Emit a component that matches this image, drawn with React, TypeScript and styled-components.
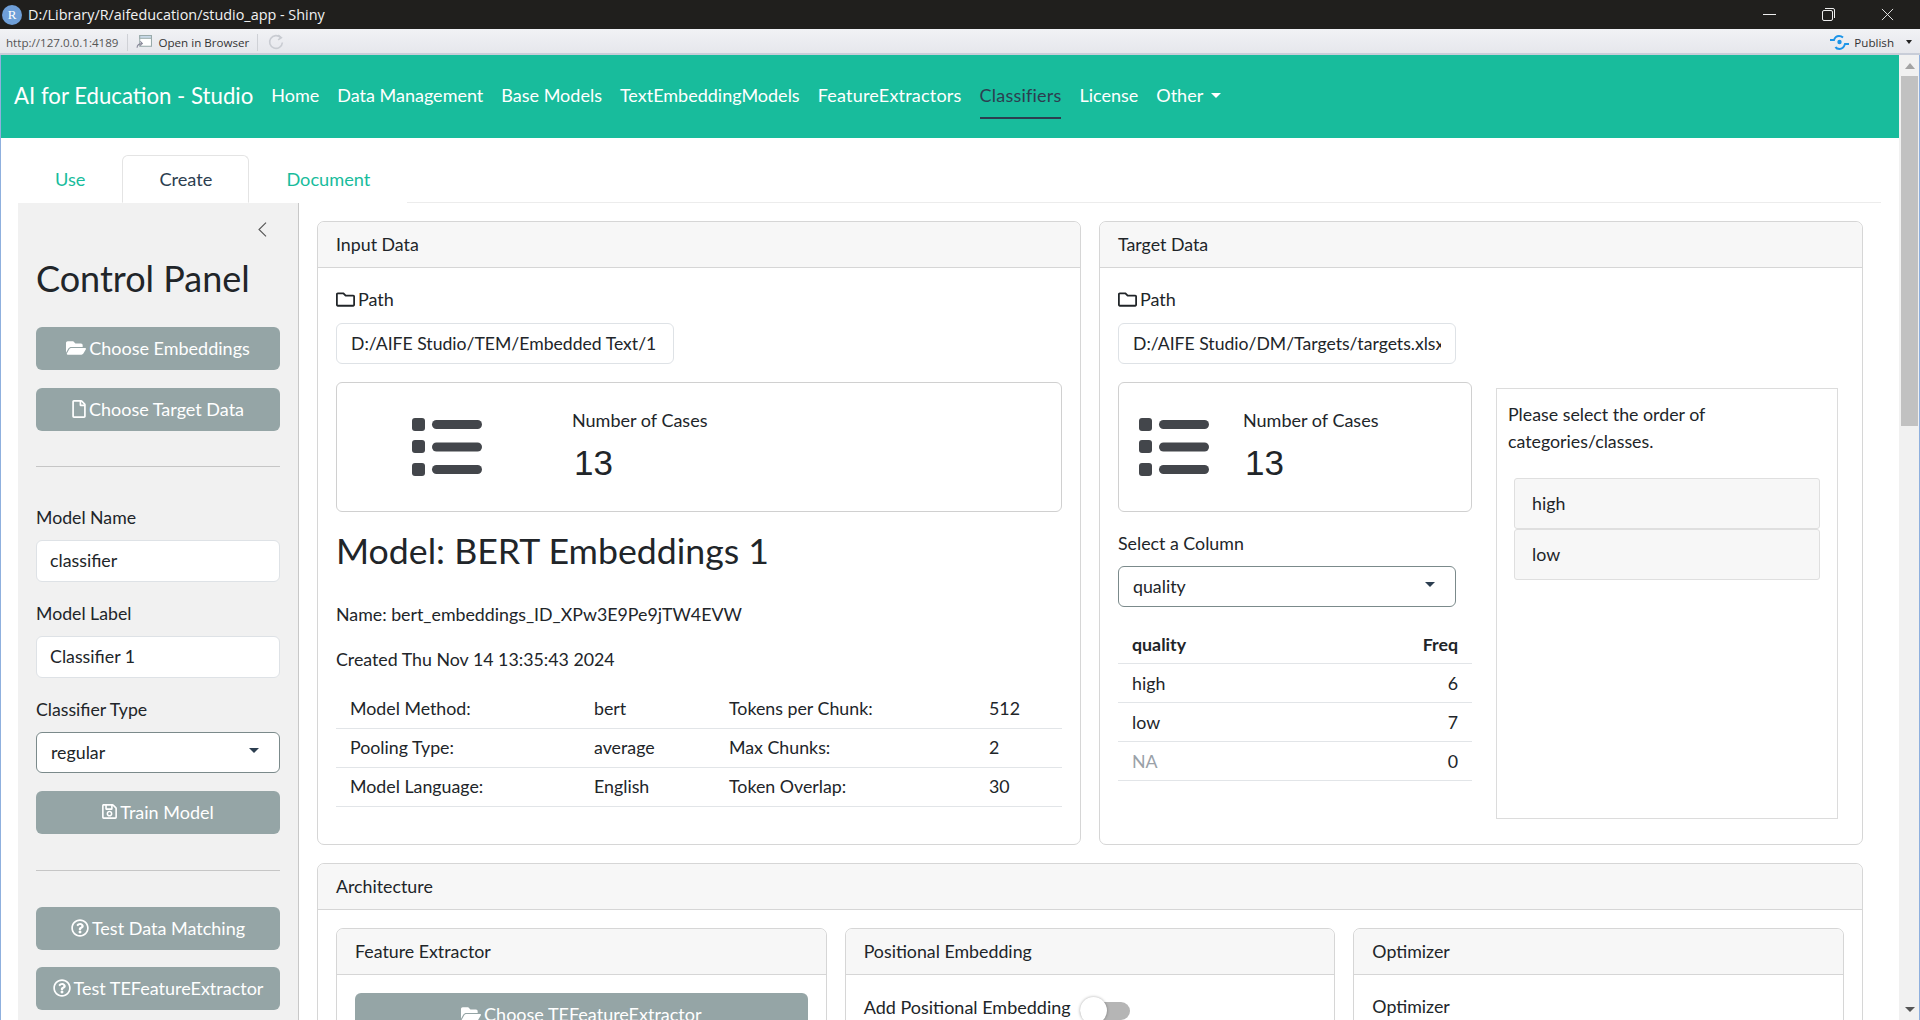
import React from "react";
import styled, { createGlobalStyle } from "styled-components";
import { FaFolderOpen, FaRegFile, FaRegSave, FaRegQuestionCircle, FaRegFolder } from "react-icons/fa";

const Global = createGlobalStyle`
  html, body { margin: 0; padding: 0; height: 100%; overflow: hidden; background: #fff; }
  body { font-family: Lato, "Liberation Sans", sans-serif; font-size: 17.8px; color: #212529; }
  * { box-sizing: border-box; }
`;

const Shell = styled.div`display: flex; flex-direction: column; width: 1920px; height: 1020px; overflow: hidden;`;
const TitleBar = styled.div`height: 29px; background: #201f1d; color: #f2f2f2; display: flex; align-items: center; padding: 0 3px 0 2px; font: 14.4px "Open Sans", sans-serif; flex: none;`;
const RLogo = styled.span`width: 20px; height: 20px; border-radius: 50%; background: #6f9fd8; color: #fff; font: 13px "Liberation Serif", serif; display: flex; align-items: center; justify-content: center; margin-right: 6px;`;
const TitleText = styled.span`flex: 1;`;
const WinBtn = styled.span`width: 59px; display: flex; justify-content: center;`;
const ToolBar = styled.div`height: 26px; flex: none; background: linear-gradient(#f1f2f5, #e6e7ec); border-bottom: 2px solid #c8cdd8; display: flex; align-items: center; padding: 2px 0 0 6px; font: 11.6px "Open Sans", sans-serif; color: #333;`;
const ToolSep = styled.span<{ $after?: number }>`width: 1px; height: 17px; background: #cfd1d6; margin: 0 ${(p) => p.$after ?? 8}px 0 8px;`;
const ToolUrl = styled.span`color: #555;`;
const ToolIcon = styled.svg`margin-right: 7px; flex: none;`;
const ToolSpacer = styled.span`flex: 1;`;
const Publish = styled.span`display: flex; align-items: center; gap: 5px; margin-right: 8px;`;
const Caret = styled.span`width: 0; height: 0; border: 3.5px solid transparent; border-top: 4px solid #222; border-bottom: 0; margin-left: 7px;`;

const Viewport = styled.div`flex: 1; min-height: 0; display: flex; border-left: 1px solid #8fb0de; border-right: 1px solid #8fb0de; background: #fff;`;
const Page = styled.div`flex: 1; min-width: 0; display: flex; flex-direction: column; overflow: hidden;`;
const Scrollbar = styled.div`width: 20px; flex: none; background: #f1f1f1; display: flex; flex-direction: column; align-items: center; padding: 0 0 0 1px;`;
const ScrollArrow = styled.div<{ $down?: boolean }>`height: 21px; width: 100%; flex: none; display: flex; align-items: center; justify-content: center;
  &::after { content: ""; border: 5px solid transparent; ${(p) => (p.$down ? "border-top: 5px solid #555; border-bottom: 0;" : "border-bottom: 6px solid #a3a3a3; border-top: 0;")} }`;
const ScrollThumb = styled.div`width: 17px; height: 350px; background: #c1c1c1; flex: none;`;
const ScrollFill = styled.div`flex: 1;`;

const Nav = styled.nav`height: 83px; flex: none; background: #18bc9c; display: flex; align-items: center; padding: 0 0 3px 13px; color: #fff;`;
const Brand = styled.span`font-size: 22.2px; margin-right: 18px;`;
const NavLink = styled.span<{ $active?: boolean; $track?: boolean }>`font-size: 18px; line-height: 24px; padding: 10px 0; margin-right: 18px; display: flex; align-items: center; gap: 8px; letter-spacing: ${(p) => (p.$track ? "0.21px" : "0")}; color: ${(p) => (p.$active ? "#2c3e50" : "#fff")}; border-bottom: 2px solid ${(p) => (p.$active ? "#2c3e50" : "transparent")}; border-top: 2px solid transparent;`;
const NavCaret = styled.span`border: 5px solid transparent; border-top: 5px solid #fff; border-bottom: 0;`;

const Tabs = styled.div`height: 65px; flex: none; margin: 0 18px 0 17px; padding-top: 17px; display: flex; border-bottom: 1px solid #ececec;`;
const Tab = styled.div<{ $active?: boolean }>`height: 48px; padding: 0 36px; margin-bottom: -1px; font-size: 18.2px; display: flex; align-items: center; border: 1px solid ${(p) => (p.$active ? "#e4e4e4" : "transparent")}; ${(p) => p.$active && "border-bottom-color: #fff;"} border-radius: 6px 6px 0 0; color: ${(p) => (p.$active ? "#2c3e50" : "#18bc9c")}; background: #fff;`;

const Layout = styled.div`flex: 1; min-height: 0; margin-left: 17px; display: flex;`;
const Side = styled.aside`width: 281px; flex: none; background: #f1f1f1; border-right: 1px solid #c8c8c8; padding: 0 18px; display: flex; flex-direction: column; align-items: stretch;`;
const Collapse = styled.div`height: 53px; flex: none; display: flex; justify-content: flex-end; align-items: center; padding-right: 13px;`;
const SideTitle = styled.h2`margin: 0 0 27px; font-size: 36px; line-height: 44px; font-weight: 400; color: #212529;`;
const Btn = styled.div<{ $mb?: number; $mt?: number }>`height: 43px; flex: none; padding-bottom: 2px; background: #95a5a6; border-radius: 6px; color: #fff; font-size: 18px; display: flex; align-items: center; justify-content: center; gap: 3px; margin-top: ${(p) => p.$mt ?? 0}px; margin-bottom: ${(p) => p.$mb ?? 18}px;`;
const FileIcon = styled(FaRegFile)`width: 14px; height: 18px;`;
const SaveIcon = styled(FaRegSave)`width: 15px; height: 17px;`;
const Rule = styled.hr<{ $after: number; $before: number }>`width: 100%; height: 1px; flex: none; border: 0; background: #c6c6c6; margin: ${(p) => p.$before}px 0 ${(p) => p.$after}px;`;
const Label = styled.div`font-size: 17.7px; line-height: 24px; padding-top: 1px; margin-bottom: 10px;`;
const SideInput = styled.div`height: 42px; flex: none; background: #fff; border: 1px solid #dee2e6; border-radius: 6px; padding: 0 13px 2px; display: flex; align-items: center; margin-bottom: 19px;`;
const SelectBox = styled.div<{ $w?: number }>`height: 41px; flex: none; background: #fff; border: 1px solid #7b8a8b; border-radius: 6px; padding: 0 14px 2px; display: flex; align-items: center; justify-content: space-between; ${(p) => p.$w && `width: ${p.$w}px;`}`;
const SelCaret = styled.span`border: 5px solid transparent; border-top: 5px solid #2c3e50; border-bottom: 0; margin-right: 6px; margin-top: -2px;`;

const Content = styled.main`flex: 1; min-width: 0; padding: 18px 36px 0 18px; display: flex; flex-direction: column; gap: 18px;`;
const Row = styled.div`display: flex; gap: 18px; flex: none;`;
const Card = styled.section<{ $h?: number; $flex?: boolean }>`border: 1px solid #d6d6d6; border-radius: 7px; background: #fff; ${(p) => p.$h && `height: ${p.$h}px;`} ${(p) => p.$flex && "flex: 1; min-width: 0;"}`;
const CardHead = styled.header`height: 46px; background: #f7f7f7; border-bottom: 1px solid #d6d6d6; border-radius: 7px 7px 0 0; padding: 0 18px 2px; display: flex; align-items: center;`;
const CardBody = styled.div`padding: 18px;`;
const FormBody = styled.div`padding: 20px 18px 18px;`;
const TopBody = styled.div`padding: 19px 18px 18px;`;
const PathLabel = styled.div`display: flex; align-items: center; gap: 3px; height: 24px; margin-bottom: 12px; font-size: 18px;`;
const PathBox = styled.div`width: 338px; height: 41px; border: 1px solid #dee2e6; border-radius: 6px; padding: 0 14px; display: flex; align-items: center; margin-bottom: 18px;`;
const PathText = styled.span`display: block; font-size: 17.6px; white-space: nowrap; overflow: hidden; flex: 1; min-width: 0;`;
const ValueBox = styled.div<{ $col: number }>`height: 130px; border: 1px solid #d0d0d0; border-radius: 6px; display: grid; grid-template-columns: ${(p) => p.$col}px 1fr; align-items: center;`;
const ValueIcon = styled.div<{ $left: number }>`display: flex; padding-left: ${(p) => p.$left}px;`;
const ValueText = styled.div`padding-bottom: 2px;`;
const ValueTitle = styled.div`font-size: 18px; line-height: 24px; margin-bottom: 9px;`;
const ValueNum = styled.div`font: 35px/44px "Liberation Sans", sans-serif; padding-left: 2px;`;
const ModelTitle = styled.h3`margin: 18px 0 30px; font-size: 35.7px; line-height: 42px; font-weight: 400;`;
const Para = styled.p`margin: 0 0 21px; line-height: 24px;`;
const InfoTable = styled.div`display: grid; grid-template-columns: 244px 135px 260px 1fr; margin-top: -2px;`;
const InfoCell = styled.div`height: 39px; border-bottom: 1px solid #e2e5e8; padding: 0 0 2px 14px; display: flex; align-items: center;`;
const TargetGrid = styled.div`display: grid; grid-template-columns: 354px 342px; column-gap: 24px;`;
const FieldLabel = styled.div`line-height: 24px; margin: 19px 0 11px;`;
const FreqTable = styled.div`display: grid; grid-template-columns: 1fr auto; margin-top: 18px; width: 354px;`;
const FreqCell = styled.div<{ $head?: boolean; $right?: boolean; $muted?: boolean }>`height: 39px; border-bottom: 1px solid #e2e5e8; display: flex; align-items: center; font-weight: ${(p) => (p.$head ? 700 : 400)}; padding: 0 14px; justify-content: ${(p) => (p.$right ? "flex-end" : "flex-start")}; color: ${(p) => (p.$muted ? "#9aa1a8" : "#212529")};`;
const OrderBox = styled.div`height: 431px; margin-top: 6px; border: 1px solid #dcdcdc; padding: 12px 11px; width: 342px;`;
const OrderText = styled.div`line-height: 27px; margin-bottom: 23px;`;
const OrderItem = styled.div`height: 51px; margin: 0 6px; background: #f7f7f7; border: 1px solid #dfdfdf; border-radius: 3px; padding: 0 17px 2px; display: flex; align-items: center;`;
const ArchBody = styled.div`padding: 18px; display: grid; grid-template-columns: 1fr 1fr 1fr; gap: 18px;`;
const SwitchRow = styled.div`display: flex; align-items: center; gap: 9px; height: 24px; font-size: 18px;`;
const SwitchTrack = styled.span`width: 50px; height: 18px; margin-top: 7px; border-radius: 9px; background: #b5b5b5; position: relative;`;
const SwitchKnob = styled.span`position: absolute; left: 0; top: -5px; width: 27px; height: 27px; border-radius: 50%; background: #fff; box-shadow: 0 0 3px rgba(0,0,0,.35);`;

const ListIcon = () => (
  <svg width="70" height="58" viewBox="0 0 70 58" fill="#43464b">
    <rect x="0" y="0" width="13" height="13" rx="3" />
    <rect x="0" y="22" width="13" height="13" rx="3" />
    <rect x="0" y="45" width="13" height="13" rx="3" />
    <rect x="20" y="2" width="50" height="9" rx="4.5" />
    <rect x="20" y="24.5" width="50" height="9" rx="4.5" />
    <rect x="20" y="47" width="50" height="9" rx="4.5" />
  </svg>
);

const PublishIcon = () => (
  <svg width="19" height="15" viewBox="0 0 19 15" fill="none" stroke="#1c94e8" strokeWidth="2">
    <path d="M0 5h4c1-3 3-4 5-4s3 .6 4 1.500" />
    <path d="M19 9h-4c-1 3-3 5-5.500 5S6 13 5.500 12" />
    <circle cx="9.500" cy="7" r="2.200" fill="#1c94e8" stroke="none" />
  </svg>
);

export default function App() {
  return (
    <Shell>
      <Global />
      <TitleBar>
        <RLogo>R</RLogo>
        <TitleText>D:/Library/R/aifeducation/studio_app - Shiny</TitleText>
        <WinBtn>
          <svg width="13" height="2"><rect width="13" height="1" fill="#eee" /></svg>
        </WinBtn>
        <WinBtn>
          <svg width="13" height="13" viewBox="0 0 13 13" fill="none" stroke="#eee">
            <rect x="0.500" y="2.500" width="10" height="10" rx="1.500" />
            <path d="M3 .5h8a1.500 1.500 0 0 1 1.500 1.500v8" />
          </svg>
        </WinBtn>
        <WinBtn>
          <svg width="13" height="13" viewBox="0 0 14 14" stroke="#eee"><path d="M1 1l12 12M13 1L1 13" /></svg>
        </WinBtn>
      </TitleBar>
      <ToolBar>
        <ToolUrl>http://127.0.0.1:4189</ToolUrl>
        <ToolSep />
        <ToolIcon width="16" height="14" viewBox="0 0 15 13">
          <rect x="3.500" y="0.500" width="11" height="10" fill="#fff" stroke="#9aa" />
          <rect x="3.500" y="0.500" width="11" height="2.500" fill="#cfe0f0" stroke="#9aa" />
          <path d="M1 12c0-3 2-4 5-4M4 6l2 2-2 2" fill="none" stroke="#889" />
        </ToolIcon>
        <span>Open in Browser</span>
        <ToolSep $after={10} />
        <svg width="16" height="16" viewBox="0 0 15 15" fill="none" stroke="#c9ccd2" strokeWidth="1.500">
          <path d="M12 3.500A6 6 0 1 0 13.500 8" />
          <path d="M9.500 1l3 2.500-3 2" />
        </svg>
        <ToolSpacer />
        <Publish>
          <PublishIcon />
          <span>Publish</span>
          <Caret />
        </Publish>
      </ToolBar>
      <Viewport>
        <Page>
          <Nav>
            <Brand>AI for Education - Studio</Brand>
            <NavLink>Home</NavLink>
            <NavLink>Data Management</NavLink>
            <NavLink>Base Models</NavLink>
            <NavLink>TextEmbeddingModels</NavLink>
            <NavLink $track>FeatureExtractors</NavLink>
            <NavLink $active $track>Classifiers</NavLink>
            <NavLink>License</NavLink>
            <NavLink>Other <NavCaret /></NavLink>
          </Nav>
          <Tabs>
            <Tab>Use</Tab>
            <Tab $active>Create</Tab>
            <Tab>Document</Tab>
          </Tabs>
          <Layout>
            <Side>
              <Collapse>
                <svg width="9" height="15" viewBox="0 0 9 15" fill="none" stroke="#555" strokeWidth="1.100">
                  <path d="M8 .7L1 7.500 8 14.300" />
                </svg>
              </Collapse>
              <SideTitle>Control Panel</SideTitle>
              <Btn><FaFolderOpen size={20} />Choose Embeddings</Btn>
              <Btn $mb={0}><FileIcon />Choose Target Data</Btn>
              <Rule $before={35} $after={38} />
              <Label>Model Name</Label>
              <SideInput>classifier</SideInput>
              <Label>Model Label</Label>
              <SideInput>Classifier 1</SideInput>
              <Label>Classifier Type</Label>
              <SelectBox>regular<SelCaret /></SelectBox>
              <Btn $mt={18} $mb={0}><SaveIcon />Train Model</Btn>
              <Rule $before={36} $after={36} />
              <Btn $mb={17}><FaRegQuestionCircle size={18} />Test Data Matching</Btn>
              <Btn><FaRegQuestionCircle size={18} />Test TEFeatureExtractor</Btn>
            </Side>
            <Content>
              <Row>
                <Card $flex $h={624}>
                  <CardHead>Input Data</CardHead>
                  <TopBody>
                    <PathLabel><FaRegFolder size={19} />Path</PathLabel>
                    <PathBox><PathText>D:/AIFE Studio/TEM/Embedded Text/1</PathText></PathBox>
                    <ValueBox $col={235}>
                      <ValueIcon $left={75}><ListIcon /></ValueIcon>
                      <ValueText>
                        <ValueTitle>Number of Cases</ValueTitle>
                        <ValueNum>13</ValueNum>
                      </ValueText>
                    </ValueBox>
                    <ModelTitle>Model: BERT Embeddings 1</ModelTitle>
                    <Para>Name: bert_embeddings_ID_XPw3E9Pe9jTW4EVW</Para>
                    <Para>Created Thu Nov 14 13:35:43 2024</Para>
                    <InfoTable>
                      <InfoCell>Model Method:</InfoCell><InfoCell>bert</InfoCell><InfoCell>Tokens per Chunk:</InfoCell><InfoCell>512</InfoCell>
                      <InfoCell>Pooling Type:</InfoCell><InfoCell>average</InfoCell><InfoCell>Max Chunks:</InfoCell><InfoCell>2</InfoCell>
                      <InfoCell>Model Language:</InfoCell><InfoCell>English</InfoCell><InfoCell>Token Overlap:</InfoCell><InfoCell>30</InfoCell>
                    </InfoTable>
                  </TopBody>
                </Card>
                <Card $flex $h={624}>
                  <CardHead>Target Data</CardHead>
                  <TopBody>
                    <PathLabel><FaRegFolder size={19} />Path</PathLabel>
                    <PathBox><PathText>D:/AIFE Studio/DM/Targets/targets.xlsx</PathText></PathBox>
                    <TargetGrid>
                      <div>
                        <ValueBox $col={124}>
                          <ValueIcon $left={20}><ListIcon /></ValueIcon>
                          <ValueText>
                            <ValueTitle>Number of Cases</ValueTitle>
                            <ValueNum>13</ValueNum>
                          </ValueText>
                        </ValueBox>
                        <FieldLabel>Select a Column</FieldLabel>
                        <SelectBox $w={338}>quality<SelCaret /></SelectBox>
                        <FreqTable>
                          <FreqCell $head>quality</FreqCell><FreqCell $head $right>Freq</FreqCell>
                          <FreqCell>high</FreqCell><FreqCell $right>6</FreqCell>
                          <FreqCell>low</FreqCell><FreqCell $right>7</FreqCell>
                          <FreqCell $muted>NA</FreqCell><FreqCell $right>0</FreqCell>
                        </FreqTable>
                      </div>
                      <OrderBox>
                        <OrderText>Please select the order of categories/classes.</OrderText>
                        <OrderItem>high</OrderItem>
                        <OrderItem>low</OrderItem>
                      </OrderBox>
                    </TargetGrid>
                  </TopBody>
                </Card>
              </Row>
              <Card>
                <CardHead>Architecture</CardHead>
                <ArchBody>
                  <Card>
                    <CardHead>Feature Extractor</CardHead>
                    <CardBody>
                      <Btn $mb={0}><FaFolderOpen size={20} />Choose TEFeatureExtractor</Btn>
                    </CardBody>
                  </Card>
                  <Card>
                    <CardHead>Positional Embedding</CardHead>
                    <FormBody>
                      <SwitchRow>Add Positional Embedding<SwitchTrack><SwitchKnob /></SwitchTrack></SwitchRow>
                    </FormBody>
                  </Card>
                  <Card>
                    <CardHead>Optimizer</CardHead>
                    <FormBody>Optimizer</FormBody>
                  </Card>
                </ArchBody>
              </Card>
            </Content>
          </Layout>
        </Page>
        <Scrollbar>
          <ScrollArrow />
          <ScrollThumb />
          <ScrollFill />
          <ScrollArrow $down />
        </Scrollbar>
      </Viewport>
    </Shell>
  );
}
